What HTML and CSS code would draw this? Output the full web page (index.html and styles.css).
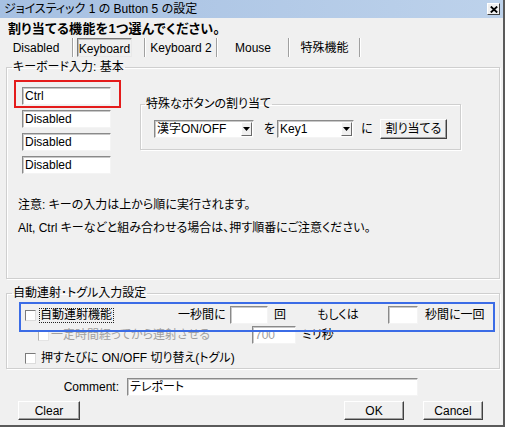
FILE: index.html
```html
<!DOCTYPE html>
<html lang="ja">
<head>
<meta charset="utf-8">
<title>ジョイスティック 1 の Button 5 の設定</title>
<link rel="stylesheet" href="styles.css">
</head>
<body>
<div class="window">
  <div class="titlebar">
    <span class="title">ジョイスティック 1 の Button 5 の設定</span>
    <span class="close"><svg width="8" height="7" viewBox="0 0 8 7"><path d="M0.8 0.5 L7.2 6.5 M7.2 0.5 L0.8 6.5" stroke="#000" stroke-width="1.8" fill="none"/></svg></span>
  </div>
  <div class="heading">割り当てる機能を1つ選んでください。</div>
  <div class="tabs">
    <span class="tab w72">Disabled</span><span class="sep"></span>
    <span class="tab w70 start"><span class="tab-btn">Keyboard</span></span><span class="sep"></span>
    <span class="tab w70">Keyboard 2</span><span class="sep"></span>
    <span class="tab w70">Mouse</span><span class="sep"></span>
    <span class="tab w69">特殊機能</span><span class="sep"></span>
  </div>

  <fieldset class="group g1">
    <legend>キーボード入力: 基本</legend>
    <div class="kb-top">
      <div class="keys">
        <div class="field key hl">Ctrl</div>
        <div class="field key">Disabled</div>
        <div class="field key">Disabled</div>
        <div class="field key">Disabled</div>
      </div>
      <fieldset class="group special">
        <legend>特殊なボタンの割り当て</legend>
        <div class="assign-row">
          <div class="combo c1"><span class="val">漢字ON/OFF</span><span class="arrow"><svg width="7" height="4" viewBox="0 0 7 4"><path d="M0 0 H7 L3.5 4 Z" fill="#000"/></svg></span></div>
          <span class="p1">を</span>
          <div class="combo c2"><span class="val">Key1</span><span class="arrow"><svg width="7" height="4" viewBox="0 0 7 4"><path d="M0 0 H7 L3.5 4 Z" fill="#000"/></svg></span></div>
          <span class="p2">に</span>
          <span class="btn assign">割り当てる</span>
        </div>
      </fieldset>
    </div>
    <p class="note n1">注意: キーの入力は上から順に実行されます。</p>
    <p class="note n2">Alt, Ctrl キーなどと組み合わせる場合は、押す順番にご注意ください。</p>
  </fieldset>

  <fieldset class="group g2">
    <legend>自動連射･トグル入力設定</legend>
    <div class="row r1">
      <span class="check"></span>
      <span class="focus">自動連射機能</span>
      <span class="lbl l-sec">一秒間に</span>
      <span class="field f-times"></span>
      <span class="lbl l-kai">回</span>
      <span class="lbl l-or">もしくは</span>
      <span class="field f-sec"></span>
      <span class="lbl l-per">秒間に一回</span>
    </div>
    <div class="row r2">
      <span class="check dis"></span>
      <span class="lbl l-delay">一定時間経ってから連射させる</span>
      <span class="field f-ms">700</span>
      <span class="lbl l-ms">ミリ秒</span>
    </div>
    <div class="row r3">
      <span class="check"></span>
      <span class="lbl l-toggle">押すたびに ON/OFF 切り替え(トグル)</span>
    </div>
  </fieldset>

  <div class="comment-row">
    <span class="c-label">Comment:</span>
    <span class="field f-comment">テレポート</span>
  </div>
  <div class="button-row">
    <span class="btn b-clear">Clear</span>
    <span class="btn b-ok">OK</span>
    <span class="btn b-cancel">Cancel</span>
  </div>
</div>
</body>
</html>
```

FILE: styles.css
```css
* { box-sizing: border-box; }
html, body { margin: 0; padding: 0; background: #f0f0f0; }
body {
  font-family: "Liberation Sans", "Noto Sans CJK JP", sans-serif;
  font-size: 12px;
  line-height: 14px;
  color: #000;
  font-feature-settings: "palt";
}
.window {
  width: 505px;
  height: 427px;
  border-right: 2px solid #5a5a5a;
  border-bottom: 2px solid #5a5a5a;
  background: #f0f0f0;
  overflow: hidden;
}
.titlebar {
  height: 18px;
  display: flex;
  align-items: center;
  justify-content: space-between;
  padding-left: 4px;
  background: linear-gradient(to right, #a6c0e2, #bdd2eb);
}
.title { font-size: 12px; line-height: 18px; }
.close {
  width: 13px;
  height: 12px;
  margin-right: 3px;
  background: #f0f0f0;
  border: 1px solid;
  border-color: #fff #404040 #404040 #fff;
  display: flex;
  align-items: center;
  justify-content: center;
}
.heading {
  height: 20px;
  line-height: 22px;
  padding-left: 8px;
  font-size: 13px;
  font-weight: bold;
  letter-spacing: 0.3px;
}
.tabs { display: flex; height: 19px; }
.tab { display: flex; align-items: center; justify-content: center; }
.tab.start { justify-content: flex-start; }
.w72 { width: 72px; }
.w70 { width: 70px; }
.w69 { width: 69px; }
.sep { width: 2px; border-left: 1px solid #a0a0a0; border-right: 1px solid #fff; }
.tab-btn {
  margin-left: 3px;
  width: 55px;
  height: 19px;
  display: flex;
  align-items: center;
  justify-content: center;
  border: 1px solid;
  border-color: #7a7a7a #e8e8e8 #e8e8e8 #7a7a7a;
  box-shadow: inset 1px 1px 0 #c0c0c0;
  padding-top: 2px;
}

.group {
  margin: 0;
  padding: 0;
  border: 1px solid #cfcfcf;
  box-shadow: inset 1px 1px 0 #fff, 1px 1px 0 #fff;
  min-inline-size: 0;
}
.group legend {
  padding: 0 1px;
  margin-left: 5px;
  line-height: 14px;
}
.g1 { margin: 3px 0 0 6px; width: 494px; height: 219px; }
.kb-top { display: flex; padding-left: 15px; }
.keys { margin-top: 13px; display: flex; flex-direction: column; gap: 5px; }
.field {
  background: #fff;
  border: 1px solid;
  border-color: #8a8a8a #f4f4f4 #f4f4f4 #8a8a8a;
  box-shadow: inset 1px 1px 0 #c8c8c8;
  height: 18px;
  line-height: 16px;
  padding-left: 2px;
  display: block;
}
.key { width: 89px; }
.hl { position: relative; }
.hl::after {
  content: "";
  position: absolute;
  left: -9px;
  right: -11px;
  top: -8px;
  bottom: -4px;
  border: 2px solid #e41b1b;
}
.special { margin: 23px 0 0 29px; width: 321px; height: 53px; }
.special legend { margin-left: 4px; }
.assign-row { display: flex; align-items: center; margin-top: 8px; padding-left: 13px; }
.combo {
  display: flex;
  height: 18px;
  background: #fff;
  border: 1px solid;
  border-color: #8a8a8a #f4f4f4 #f4f4f4 #8a8a8a;
  box-shadow: inset 1px 1px 0 #c8c8c8;
  padding: 1px 1px 1px 1px;
}
.c1 { width: 100px; }
.c2 { width: 77px; }
.combo .val { flex: 1; line-height: 15px; padding-left: 1px; }
.combo .arrow {
  width: 11px;
  height: 14px;
  background: #f0f0f0;
  border: 1px solid;
  border-color: #fff #6a6a6a #6a6a6a #fff;
  display: flex;
  align-items: center;
  justify-content: center;
}
.p1 { width: 23px; padding-left: 8px; text-align: center; }
.p2 { width: 26px; text-align: center; }
.btn {
  display: flex;
  align-items: center;
  justify-content: center;
  background: #f0f0f0;
  border: 1px solid;
  border-color: #fff #404040 #404040 #fff;
  box-shadow: inset -1px -1px 0 #a0a0a0;
}
.assign { width: 67px; height: 20px; }
.note { margin: 0 0 0 11px; line-height: 16px; }
.n1 { margin-top: 23px; }
.n2 { margin-top: 7px; }

.g2 { margin: 7px 0 0 6px; width: 494px; height: 83px; }
.row { display: flex; align-items: center; }
.r1 { position: relative; height: 22px; margin-top: 4px; }
.r1::after {
  content: "";
  position: absolute;
  left: 12px;
  top: -2px;
  width: 472px;
  height: 26px;
  border: 2px solid #3b6ce6;
}
.check {
  width: 11px;
  height: 11px;
  background: #fff;
  border: 1px solid;
  border-color: #7a7a7a #dcdcdc #dcdcdc #7a7a7a;
  flex: none;
}
.r1 .check, .r3 .check { margin-left: 18px; }
.focus { margin-left: 3px; border: 1px dotted #222; line-height: 13px; padding: 0 1px 0 0; }
.lbl { white-space: nowrap; }
.l-sec { margin-left: 64px; width: 52px; }
.f-times { width: 38px; }
.l-kai { margin-left: 6px; width: 12px; }
.l-or { margin-left: 31px; width: 71px; }
.f-sec { width: 30px; }
.l-per { margin-left: 7px; }
.r2 { height: 18px; }
.check.dis { margin-left: 31px; border-color: #b0b0b0 #e4e4e4 #e4e4e4 #b0b0b0; }
.l-delay { margin-left: 2px; width: 201px; color: #a0a0a0; }
.f-ms { width: 44px; color: #a0a0a0; }
.l-ms { margin-left: 6px; }
.r3 { height: 16px; margin-top: 6px; }
.l-toggle { margin-left: 5px; }

.comment-row { display: flex; align-items: center; margin-top: 9px; }
.c-label { width: 119px; text-align: right; margin-right: 8px; }
.f-comment { width: 291px; }
.button-row { display: flex; margin-top: 5px; height: 19px; }
.b-clear { margin-left: 18px; width: 62px; }
.b-ok { margin-left: auto; width: 60px; }
.b-cancel { margin-left: 19px; margin-right: 20px; width: 60px; }
```
